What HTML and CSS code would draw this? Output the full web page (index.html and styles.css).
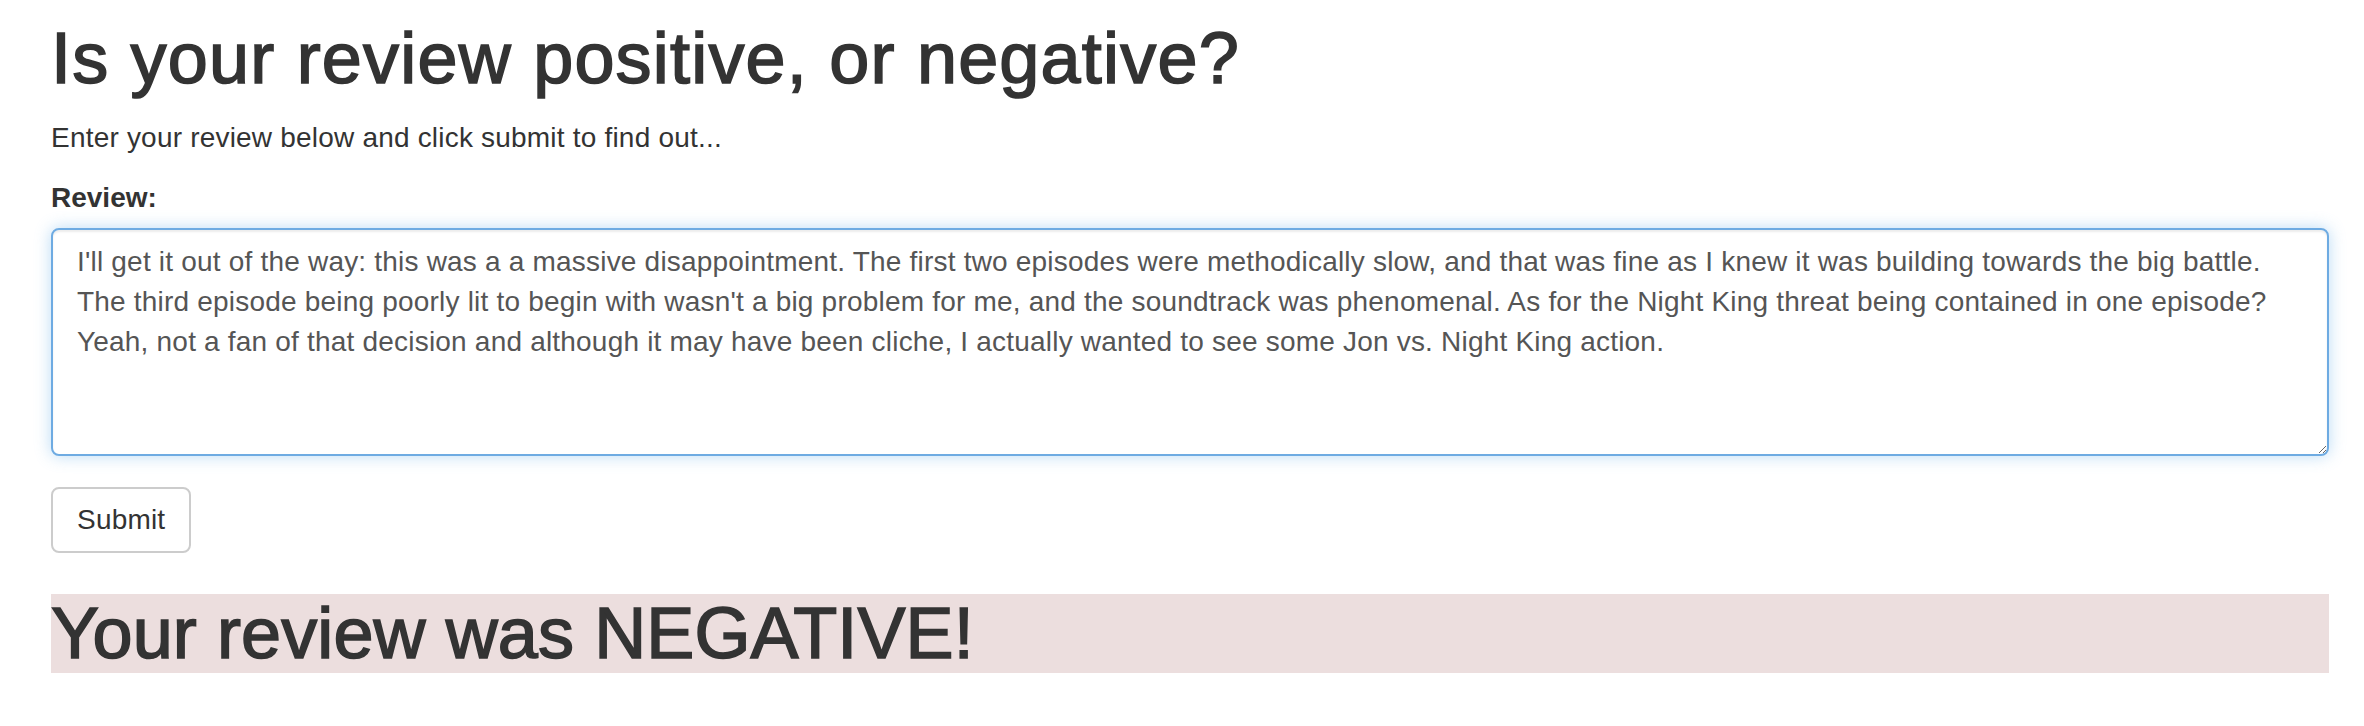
FILE: index.html
```html
<!DOCTYPE html>
<html lang="en">
<head>
<meta charset="utf-8">
<title>Review sentiment</title>
<link rel="stylesheet" href="styles.css">
</head>
<body>
<main class="page">
  <h1 class="title">Is your review positive, or negative?</h1>
  <p class="intro">Enter your review below and click submit to find out...</p>
  <form class="review-form">
    <div class="field">
      <label class="field-label" for="review">Review:</label>
      <textarea class="review-input" id="review" rows="5">I'll get it out of the way: this was a a massive disappointment. The first two episodes were methodically slow, and that was fine as I knew it was building towards the big battle.
The third episode being poorly lit to begin with wasn't a big problem for me, and the soundtrack was phenomenal. As for the Night King threat being contained in one episode?
Yeah, not a fan of that decision and although it may have been cliche, I actually wanted to see some Jon vs. Night King action. </textarea>
    </div>
    <button class="submit-btn" type="button">Submit</button>
  </form>
  <h1 class="result">Your review was NEGATIVE!</h1>
</main>
</body>
</html>
```

FILE: styles.css
```css
* {
  box-sizing: border-box;
}

body {
  margin: 0;
  font-family: "Liberation Sans", Arial, Helvetica, sans-serif;
  font-size: 28px;
  line-height: 40px;
  letter-spacing: 0.2px;
  color: #333333;
  background: #ffffff;
}

.page {
  padding: 19px 35px 0 51px;
}

.title {
  margin: 0 0 20px;
  font-size: 72px;
  line-height: 1.1;
  font-weight: 400;
  letter-spacing: 1.2px;
  -webkit-text-stroke: 1.6px #333333;
}

.intro {
  margin: 0 0 20px;
}

.review-form {
  margin: 0;
}

.field {
  margin-bottom: 31px;
}

.field-label {
  display: inline-block;
  margin-bottom: 10px;
  font-weight: 700;
  letter-spacing: 0;
}

.review-input {
  display: block;
  width: 100%;
  height: 228px;
  padding: 12px 24px;
  font: inherit;
  letter-spacing: 0.2px;
  color: #555555;
  background: #ffffff;
  border: 2px solid #6eabe2;
  border-radius: 8px;
  box-shadow: inset 0 2px 2px rgba(0, 0, 0, 0.075), 0 0 16px rgba(102, 175, 233, 0.45);
  outline: none;
  resize: vertical;
  white-space: pre-wrap;
}

.submit-btn {
  display: inline-block;
  padding: 11px 24px;
  font: inherit;
  letter-spacing: 0.2px;
  color: #333333;
  background: #ffffff;
  border: 2px solid #cccccc;
  border-radius: 8px;
  cursor: pointer;
}

.result {
  margin: 41px 0 20px;
  font-size: 72px;
  line-height: 1.1;
  font-weight: 400;
  letter-spacing: 0.1px;
  -webkit-text-stroke: 1.6px #333333;
  background: #ecdede;
}
```
